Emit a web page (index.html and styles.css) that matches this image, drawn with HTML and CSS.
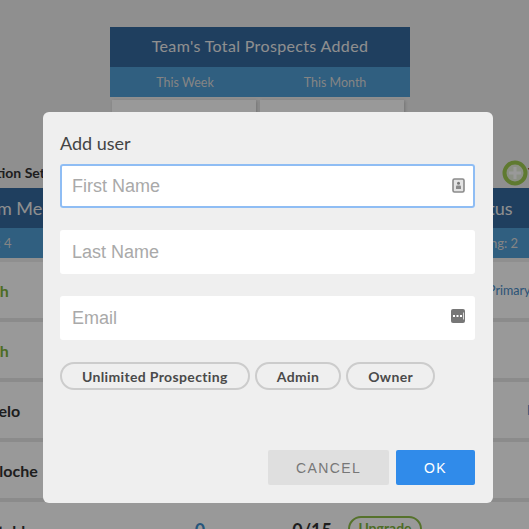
FILE: index.html
```html
<!DOCTYPE html>
<html lang="en">
<head>
<meta charset="utf-8">
<title>Add user</title>
<link rel="stylesheet" href="styles.css">
</head>
<body>
<main class="page">
  <section class="totals">
    <h2 class="totals-title">Team's Total Prospects Added</h2>
    <div class="totals-sub"><span>This Week</span><span>This Month</span></div>
    <div class="totals-cards"><div class="card"></div><div class="card"></div></div>
  </section>
  <div class="toolbar">
    <strong>Action Set</strong>
    <div class="toolbar-add">
      <svg class="add-icon" viewBox="0 0 26 26" aria-hidden="true"><circle cx="13" cy="13" r="10.5"/><path d="M13 7v12M7 13h12"/></svg>
      <strong>Team</strong>
    </div>
  </div>
  <section class="roster">
    <div class="grid head"><span>Team Members</span><span></span><span></span><span></span><span class="center">Status</span></div>
    <div class="grid sub"><span>Total: 4</span><span></span><span></span><span></span><span class="center">Pending: 2</span></div>
    <div class="grid row"><b class="go">Fresh</b><span></span><span></span><span></span><a class="primary">Primary</a></div>
    <div class="grid row"><b class="go">Fresh</b><span></span><span></span><span></span><span></span></div>
    <div class="grid row"><b>Angelo</b><span></span><span></span><span></span><a class="far">Primary</a></div>
    <div class="grid row"><b>Al Bloche</b><span></span><span></span><span></span><span></span></div>
    <div class="grid row"><b>Jo Stable</b><span class="count">0</span><b class="quota">0/15</b><span class="upgrade">Upgrade</span><span></span></div>
  </section>
</main>
<div class="overlay"></div>
<form class="modal">
  <h1>Add user</h1>
  <div class="field">
    <input class="input" type="text" placeholder="First Name" autofocus>
    <svg class="field-icon" viewBox="0 0 14 16" aria-hidden="true"><rect x="1" y="1" width="11" height="13" rx="1.5" fill="#e4e4e4" stroke="#8a8a8a" stroke-width="1.6"/><circle cx="6.5" cy="5.2" r="1.5" fill="#777"/><path d="M4 11V8.6q0-1 1-1h3q1 0 1 1V11z" fill="#8a8a8a"/></svg>
  </div>
  <div class="field"><input class="input" type="text" placeholder="Last Name"></div>
  <div class="field">
    <input class="input" type="email" placeholder="Email">
    <svg class="field-icon mail" viewBox="0 0 14 14" aria-hidden="true"><rect width="14" height="14" rx="2" fill="#777"/><path d="M2 6h2v2H2zM5.500 6h2v2h-2zM9 6h2v2H9z" fill="#fff"/><path d="M12.500 3.500v7" stroke="#ddd"/></svg>
  </div>
  <div class="pills">
    <button type="button" class="pill">Unlimited Prospecting</button>
    <button type="button" class="pill">Admin</button>
    <button type="button" class="pill">Owner</button>
  </div>
  <div class="actions">
    <button type="button" class="btn cancel">CANCEL</button>
    <button type="button" class="btn ok">OK</button>
  </div>
</form>
</body>
</html>
```
FILE: styles.css
```css
* { box-sizing: border-box; }
html, body { margin: 0; height: 529px; overflow: hidden; }
body { background: #eee; font-family: Lato, "Liberation Sans", sans-serif; color: #333; position: relative; }
.page { width: 529px; height: 529px; overflow: hidden; padding-top: 27px; }
.totals { width: 300px; margin-left: 110px; }
.totals-title { margin: 0; height: 40px; line-height: 38px; background: #34699e; color: #eee; font-size: 16px; font-weight: 400; text-align: center; letter-spacing: .35px; }
.totals-sub { height: 30px; background: #509ed5; display: grid; grid-template-columns: 150px 150px; align-items: center; color: #ddd; font-size: 12.500px; text-align: center; }
.totals-cards { display: grid; grid-template-columns: 144px 144px; gap: 4px; margin: 3px 0 0 2px; }
.card { height: 50px; background: #fff; box-shadow: 1px 1px 3px rgba(0,0,0,.2); }
.toolbar { margin: 7px -40px 0 -20px; height: 31px; display: flex; justify-content: space-between; align-items: center; font-size: 14px; color: #333; }
.toolbar-add { display: flex; align-items: center; gap: 0; width: 67px; margin-left: auto; }
.add-icon { width: 26px; height: 26px; flex: none; }
.add-icon circle { fill: #e8f0dc; stroke: #9ecb50; stroke-width: 4; }
.add-icon path { stroke: #fff; stroke-width: 3; fill: none; }
.roster { margin-left: -30px; width: 620px; }
.grid { display: grid; grid-template-columns: 190px 80px 92px 90px 132px; align-items: center; }
.head { height: 40px; background: #34699e; color: #eee; font-size: 18px; }
.sub { height: 30px; background: #509ed5; color: #ddd; font-size: 13px; }
.center { text-align: center; }
.row { height: 56px; margin-top: 4px; background: #fff; box-shadow: 0 4px 0 #e8e8e8; font-size: 16px; color: #333; }
.row b { font-weight: 700; }
.sub + .row { margin-top: 4px; }
.go { color: #7fb53d; }
.primary { padding-left: 66px; color: #4a8cc7; font-size: 12.500px; white-space: nowrap; }
.far { padding-left: 105px; color: #4a8cc7; font-size: 12.500px; white-space: nowrap; }
.count { text-align: center; color: #3f8fcf; font-size: 18px; font-weight: 700; }
.quota { text-align: right; font-size: 18px; }
.upgrade { margin-left: 16px; width: 74px; height: 26px; border: 2px solid #8fbf4a; border-radius: 13px; color: #7fb53d; font-size: 14px; font-weight: 700; text-align: center; line-height: 20px; margin-top: -2px; }
.overlay { position: absolute; inset: 0; background: rgba(0,0,0,.4); }
.modal { position: absolute; left: 43px; top: 112px; width: 450px; height: 391px; padding: 21px 18px 18px 17px; background: #efefef; border-radius: 6px; display: flex; flex-direction: column; }
.modal h1 { margin: 0 0 10px; height: 21px; font-size: 18px; line-height: 21px; font-weight: 400; color: #444; }
.field { position: relative; margin-bottom: 22px; height: 44px; }
.input { display: block; width: 100%; height: 44px; padding: 0 12px; border: 0; border-radius: 3px; background: #fff; font-family: "Liberation Sans", Arial, sans-serif; font-size: 18px; color: #333; outline: none; }
.input::placeholder { color: #a9a9a9; opacity: 1; }
.input:focus { box-shadow: 0 0 0 2px #8fbdf4 inset; }
.field-icon { position: absolute; right: 9px; top: 14px; width: 14px; height: 16px; }
.field-icon.mail { top: 13px; right: 10px; height: 14px; }
.pills { display: flex; gap: 5px; margin-top: 0; }
.pill { height: 28px; padding: 0 20px; border: 2px solid #ccc; border-radius: 14px; background: transparent; font-family: Lato, sans-serif; font-weight: 700; font-size: 14px; letter-spacing: .35px; color: #4a4a4a; }
.actions { margin-top: auto; display: flex; justify-content: flex-end; gap: 7px; }
.btn { height: 35px; border: 0; border-radius: 2px; font-family: "Liberation Sans", Arial, sans-serif; font-size: 14px; letter-spacing: 1.400px; }
.cancel { width: 121px; background: #dfdfdf; color: #777; }
.ok { width: 79px; background: #308bea; color: #fff; }
```
